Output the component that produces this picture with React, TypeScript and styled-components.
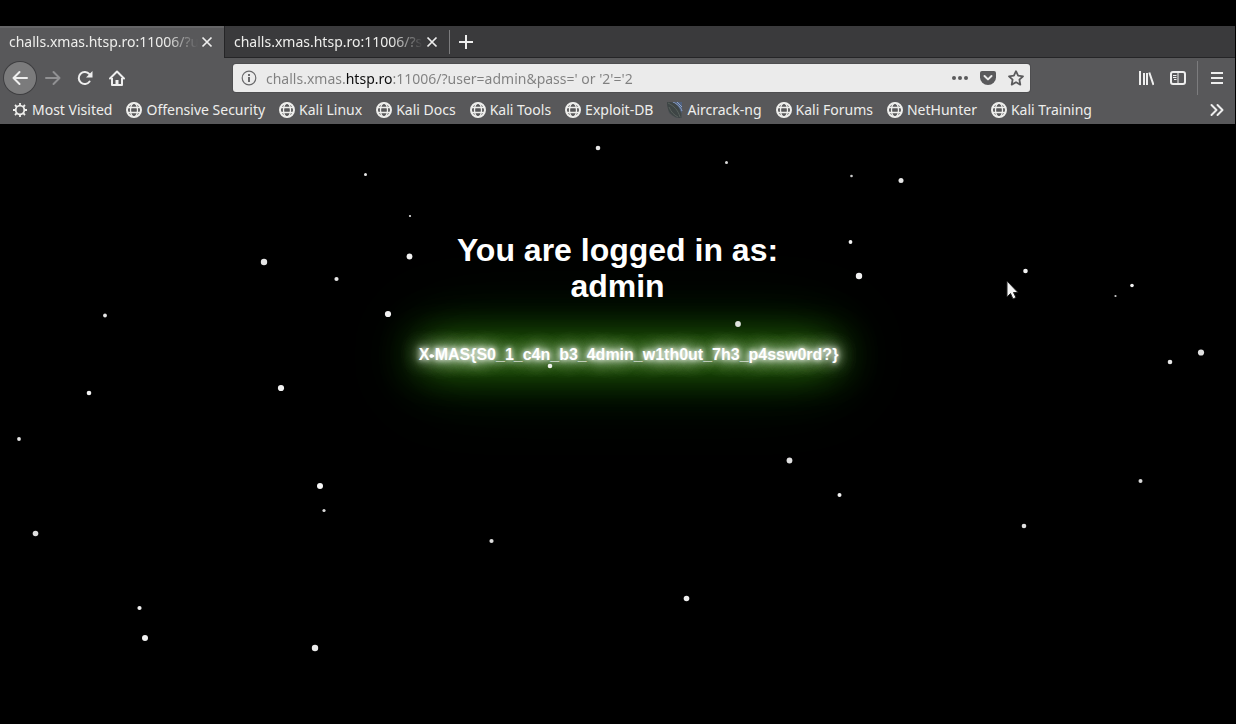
import React from "react";
import styled, { createGlobalStyle, css } from "styled-components";

const Global = createGlobalStyle`
  * { box-sizing: border-box; }
  html, body, #root { height: 100%; }
  body { margin: 0; background: #000; }
  button, input { font: inherit; color: inherit; border: 0; margin: 0; padding: 0; background: none; outline: none; }
  h1, p { margin: 0; }
`;

const Screen = styled.div`
  min-height: 100%;
  display: flex;
  flex-direction: column;
  padding: 26px 1px 0 0;
  background: #000;
  overflow: hidden;
`;

const Chrome = styled.header`
  font: 14px/20px "Noto Sans", sans-serif;
  color: #eeeeec;
  background: #58585a;
`;

const TabStrip = styled.div`
  display: flex;
  height: 32px;
  background: #3a3a3c;
  border-bottom: 1px solid #252527;
`;

const Tab = styled.div<{ $active?: boolean }>`
  display: flex;
  align-items: center;
  width: 224px;
  height: 31px;
  padding: 0 8px 0 9px;
  ${(p) =>
    p.$active &&
    css`
      width: 225px;
      height: 32px;
      padding-bottom: 1px;
      background: #58585a;
      border-right: 1px solid #252527;
      box-shadow: inset 0 2px #656567;
    `}
`;

const TabTitle = styled.button`
  flex: 1;
  min-width: 0;
  overflow: hidden;
  white-space: nowrap;
  text-align: left;
  mask-image: linear-gradient(to left, transparent, #000 32px);
`;

const IconButton = styled.button<{ $width?: number; $dim?: boolean }>`
  display: flex;
  align-items: center;
  justify-content: center;
  flex: none;
  width: ${(p) => p.$width ?? 32}px;
  height: 100%;
  color: ${(p) => (p.$dim ? "#919193" : "#eeeeee")};
`;

const Divider = styled.span<{ $height: number }>`
  flex: none;
  width: 1px;
  height: ${(p) => p.$height}px;
  margin-top: 4px;
  background: #7c7c7e;
`;

const NavDivider = styled(Divider)`
  margin: 0 3px;
`;

const NavBar = styled.nav`
  display: flex;
  align-items: center;
  height: 40px;
  padding: 0 2px 0 4px;
`;

const BackButton = styled(IconButton)`
  height: 32px;
  margin-right: 1px;
  border-radius: 50%;
  background: #7b7b7c;
  box-shadow: 0 0 0 1px #3e3e40;
`;

const Spacer = styled.div`
  flex: 100 1 0;
`;

const AddressBar = styled.label`
  display: flex;
  align-items: center;
  flex: 797 1 0;
  min-width: 0;
  height: 28px;
  border-radius: 3px;
  background: #ebebeb;
  box-shadow: 0 0 0 1px #4e4e50;
`;

const SiteInfo = styled.span`
  display: flex;
  justify-content: center;
  flex: none;
  width: 33px;
  padding-right: 1px;
  color: #6a6a6c;
`;

const AddressAction = styled(IconButton)`
  color: #5a5a5c;
`;

const Address = styled.input`
  flex: 1;
  min-width: 0;
  height: 28px;
  color: transparent;
  background: linear-gradient(to right, #808080 80px, #0c0c0d 80px 127px, #808080 127px);
  background-clip: text;
  -webkit-background-clip: text;
`;

const Bookmarks = styled.div`
  display: flex;
  align-items: center;
  gap: 14px;
  height: 26px;
  padding: 0 6px 2px 12px;
`;

const Bookmark = styled.a`
  display: flex;
  align-items: center;
  gap: 4px;
  color: inherit;
  text-decoration: none;
  white-space: nowrap;
`;

const MoreButton = styled(IconButton)`
  margin-left: auto;
`;

const Page = styled.main`
  position: relative;
  flex: 1;
  padding-top: 108px;
  text-align: center;
  font-family: "Liberation Sans", Arial, sans-serif;
  font-weight: bold;
  color: #fff;
`;

const Heading = styled.h1`
  position: relative;
  z-index: 1;
  font-size: 32px;
  line-height: 36px;
`;

const Flag = styled.p`
  padding: 42px 0 0 22px;
  font-size: 16px;
  line-height: 18px;
`;

const Glow = styled.span`
  position: relative;
  isolation: isolate;
  text-shadow:
    0 0 5px #fff,
    0 0 10px #fff,
    0 0 20px #fff,
    0 0 20px #c8ffb0;

  &::before {
    content: "";
    position: absolute;
    z-index: -1;
    top: 50%;
    left: 8px;
    right: 8px;
    height: 0;
    box-shadow:
      0 0 40px 7px #59c818,
      0 0 60px 8px #208000,
      0 0 90px 8px #084800;
  }
`;

const Snow = styled.svg`
  position: absolute;
  inset: 0;
  width: 100%;
  height: 100%;
  pointer-events: none;
`;

const Pointer = styled.svg`
  position: absolute;
  left: 1005px;
  top: 156px;
`;

const Icon = ({ children }: { children: React.ReactNode }) => (
  <svg width="16" height="16" viewBox="0 0 16 16" fill="none" stroke="currentColor" strokeWidth="2" aria-hidden="true">
    {children}
  </svg>
);

const CloseIcon = () => <Icon><path d="M3.500 3.500l9 9M12.500 3.500l-9 9" strokeWidth="1.700" /></Icon>;
const PlusIcon = () => <Icon><path d="M8 1v14M1 8h14" /></Icon>;
const BackIcon = () => <Icon><path d="M15 8H1.500M7.500 2l-6 6 6 6" strokeLinecap="round" strokeLinejoin="round" /></Icon>;
const ForwardIcon = () => <Icon><path d="M1 8h13.500M8.500 2l6 6-6 6" strokeLinecap="round" strokeLinejoin="round" /></Icon>;
const ReloadIcon = () => (
  <Icon>
    <path d="M12.600 11.500A6 6 0 1 1 12.400 4.200" strokeLinecap="round" />
    <path d="M15.500 1v6.500H9z" fill="currentColor" stroke="none" />
  </Icon>
);
const HomeIcon = () => (
  <Icon>
    <path d="M1 8.500L8 1.500l7 7" strokeLinecap="round" strokeLinejoin="round" />
    <path d="M3 8v7h10V8" strokeLinejoin="round" />
    <path d="M6.500 15v-5h3v5z" fill="currentColor" stroke="none" />
  </Icon>
);
const InfoIcon = () => (
  <Icon>
    <circle cx="8" cy="8" r="6.800" strokeWidth="1.200" />
    <path d="M8 7v5M8 4v2" />
  </Icon>
);
const DotsIcon = () => (
  <Icon>
    <g fill="currentColor" stroke="none">
      <circle cx="2" cy="8" r="2" /><circle cx="8" cy="8" r="2" /><circle cx="14" cy="8" r="2" />
    </g>
  </Icon>
);
const PocketIcon = () => (
  <Icon>
    <path d="M2 1h12a2 2 0 0 1 2 2v4.500a8 7.500 0 0 1-16 0V3a2 2 0 0 1 2-2z" fill="currentColor" stroke="none" />
    <path d="M4.500 6L8 9.400 11.500 6" stroke="#ebebeb" strokeLinecap="round" strokeLinejoin="round" />
  </Icon>
);
const StarIcon = () => (
  <Icon><path d="M8 1.200l2.100 4.500 4.900.6-3.600 3.400.9 4.900L8 12.200l-4.300 2.400.9-4.900L1 6.300l4.900-.6z" strokeWidth="1.800" strokeLinejoin="round" /></Icon>
);
const LibraryIcon = () => <Icon><path d="M2 1v14M6 3v12M9 3v12M11.300 2.500L15.500 15" /></Icon>;
const SidebarIcon = () => (
  <Icon>
    <rect x="1" y="2" width="14" height="12" rx="2" />
    <path d="M8 2v12M3 5.500h3.500M3 7.500h3.500M4 9.500h2.500" strokeWidth="1" />
  </Icon>
);
const MenuIcon = () => <Icon><path d="M2 3h12M2 8h12M2 13h12" /></Icon>;
const ChevronsIcon = () => (
  <Icon><path d="M2.500 3l5 5-5 5M8.500 3l5 5-5 5" strokeLinecap="round" strokeLinejoin="round" /></Icon>
);
const GearIcon = () => (
  <Icon>
    <circle cx="8" cy="8" r="4.300" strokeWidth="1.800" />
    <path d="M8 1v2.500M8 12.500V15M1 8h2.500M12.500 8H15M3 3l1.800 1.800M11.200 11.200L13 13M3 13l1.800-1.800M11.200 4.800L13 3" strokeWidth="1.800" />
  </Icon>
);
const GlobeIcon = () => (
  <Icon>
    <circle cx="8" cy="8" r="7" />
    <ellipse cx="8" cy="8" rx="3.500" ry="7" strokeWidth="1.300" />
    <path d="M2 5.500h12M2 10.500h12" strokeWidth="1.300" />
  </Icon>
);
const AircrackIcon = () => (
  <svg width="16" height="16" viewBox="0 0 16 16" aria-hidden="true">
    <path d="M0 0h15v16H9L2 11z" fill="#4b5054" />
    <path d="M5 0h10v11z" fill="#50617e" />
    <path d="M6 0c4 2 8 5 9 9M10 0l5 5" stroke="#8fa4c8" strokeWidth="1" fill="none" />
    <path d="M0 0c9-1 14 6 14 14l-1 2C5 15 0 10 0 0z" fill="#3e4545" />
    <path d="M1 1c6 3 10 7 12 14M2 5c2 5 5 8 9 10" stroke="#59615d" strokeWidth="1" fill="none" />
  </svg>
);

const bookmarks = [
  { label: "Most Visited", icon: GearIcon },
  { label: "Offensive Security", icon: GlobeIcon },
  { label: "Kali Linux", icon: GlobeIcon },
  { label: "Kali Docs", icon: GlobeIcon },
  { label: "Kali Tools", icon: GlobeIcon },
  { label: "Exploit-DB", icon: GlobeIcon },
  { label: "Aircrack-ng", icon: AircrackIcon },
  { label: "Kali Forums", icon: GlobeIcon },
  { label: "NetHunter", icon: GlobeIcon },
  { label: "Kali Training", icon: GlobeIcon },
];

// x, y, radius and opacity of each snowflake
const flakes: [number, number, number, number][] = [
  [598, 24, 2.3, 0.9], [726.500, 38.500, 1.5, 0.85], [365.500, 50.500, 1.5, 0.9], [851.500, 52, 1.3, 0.8],
  [901, 56.500, 2.5, 0.9], [410, 92, 1.1, 0.9], [264, 138, 3.2, 0.9], [409.500, 132.500, 2.9, 0.95],
  [336.500, 155, 2.1, 0.9], [850.500, 118, 1.9, 0.95], [859, 152, 3.2, 0.95], [1025.500, 147, 2.3, 0.95],
  [1132, 161.500, 1.8, 0.95], [1115.500, 172, 1.1, 0.8], [388, 190, 3.1, 0.95], [105, 191.500, 1.9, 0.9],
  [738, 200, 2.9, 0.87], [431.500, 232, 2, 0.9], [550, 242, 2.3, 0.92], [1170, 238, 2.3, 0.9],
  [1201, 228.500, 3.1, 0.88], [281, 264, 3.1, 0.95], [89, 269, 2.3, 0.95], [19, 315, 1.9, 0.9],
  [789.500, 336.500, 2.9, 0.88], [839.500, 371, 2, 0.95], [1140.500, 357, 2, 0.85], [320, 362, 3, 0.97],
  [324, 386.500, 1.6, 0.85], [35.500, 409.500, 2.8, 0.87], [1024, 402, 2.3, 0.88], [491.500, 417, 2.1, 0.87],
  [686.500, 474.500, 2.8, 0.93], [139.500, 484, 2.1, 0.95], [145, 514, 3, 0.95], [315, 524, 3.2, 0.92],
];

export default function App() {
  return (
    <Screen>
      <Global />
      <Chrome>
        <TabStrip>
          <Tab $active>
            <TabTitle>challs.xmas.htsp.ro:11006/?u</TabTitle>
            <IconButton $width={18} aria-label="Close tab"><CloseIcon /></IconButton>
          </Tab>
          <Tab>
            <TabTitle>challs.xmas.htsp.ro:11006/?s</TabTitle>
            <IconButton $width={18} aria-label="Close tab"><CloseIcon /></IconButton>
          </Tab>
          <Divider $height={24} />
          <IconButton aria-label="New tab"><PlusIcon /></IconButton>
        </TabStrip>

        <NavBar>
          <BackButton aria-label="Back"><BackIcon /></BackButton>
          <IconButton $dim aria-label="Forward"><ForwardIcon /></IconButton>
          <IconButton aria-label="Reload"><ReloadIcon /></IconButton>
          <IconButton aria-label="Home"><HomeIcon /></IconButton>
          <Spacer />
          <AddressBar>
            <SiteInfo><InfoIcon /></SiteInfo>
            <Address aria-label="Address" type="text" defaultValue="challs.xmas.htsp.ro:11006/?user=admin&pass=' or '2'='2" />
            <AddressAction $width={28} aria-label="Page actions"><DotsIcon /></AddressAction>
            <AddressAction $width={28} aria-label="Save to Pocket"><PocketIcon /></AddressAction>
            <AddressAction $width={28} aria-label="Bookmark this page"><StarIcon /></AddressAction>
          </AddressBar>
          <Spacer />
          <IconButton aria-label="Library"><LibraryIcon /></IconButton>
          <IconButton aria-label="Sidebars"><SidebarIcon /></IconButton>
          <NavDivider $height={34} />
          <IconButton aria-label="Open menu"><MenuIcon /></IconButton>
        </NavBar>

        <Bookmarks>
          {bookmarks.map(({ label, icon: Mark }) => (
            <Bookmark href="#" key={label}>
              <Mark />
              {label}
            </Bookmark>
          ))}
          <MoreButton $width={24} aria-label="Show more bookmarks"><ChevronsIcon /></MoreButton>
        </Bookmarks>
      </Chrome>

      <Page>
        <Heading>
          You are logged in as:
          <br />
          admin
        </Heading>
        <Flag>
          <Glow>{"X-MAS{S0_1_c4n_b3_4dmin_w1th0ut_7h3_p4ssw0rd?}"}</Glow>
        </Flag>
        <Snow aria-hidden="true">
          {flakes.map(([x, y, r, o]) => (
            <circle key={`${x}-${y}`} cx={x} cy={y} r={r} fill="#fff" fillOpacity={o} />
          ))}
        </Snow>
        <Pointer width="14" height="21" viewBox="0 0 14 21" aria-hidden="true">
          <path d="M2 1v16l3.500-3.500 2.500 5.500 3-1.500-2.500-5H13z" fill="#f4f4f4" stroke="#222" strokeWidth="1" />
        </Pointer>
      </Page>
    </Screen>
  );
}
